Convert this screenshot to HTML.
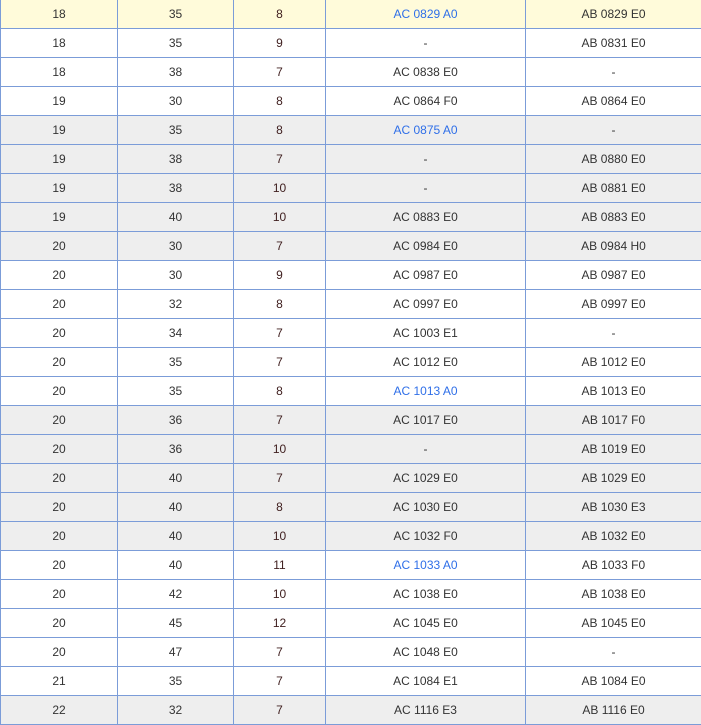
<!DOCTYPE html>
<html><head><style>
body{margin:0;background:#fff;font-family:"Liberation Sans",Arial,sans-serif;font-size:12px;color:#333;}
table{position:absolute;left:0;top:-1px;border-collapse:collapse;width:701px;table-layout:fixed;}
td{border:1px solid #7b9cd8;height:28px;padding:0;text-align:center;line-height:28px;}
tr.g td{background:#eeeeee}
tr.y td{background:#fffbda}
td.c3{color:#402020}
a{color:#2f6fe8;text-decoration:none}
</style></head><body>
<table>
<colgroup><col style="width:117px"><col style="width:116px"><col style="width:92px"><col style="width:200px"><col style="width:176px"></colgroup>
<tr class="y"><td>18</td><td>35</td><td class="c3">8</td><td><a>AC 0829 A0</a></td><td>AB 0829 E0</td></tr>
<tr><td>18</td><td>35</td><td class="c3">9</td><td>-</td><td>AB 0831 E0</td></tr>
<tr><td>18</td><td>38</td><td class="c3">7</td><td>AC 0838 E0</td><td>-</td></tr>
<tr><td>19</td><td>30</td><td class="c3">8</td><td>AC 0864 F0</td><td>AB 0864 E0</td></tr>
<tr class="g"><td>19</td><td>35</td><td class="c3">8</td><td><a>AC 0875 A0</a></td><td>-</td></tr>
<tr class="g"><td>19</td><td>38</td><td class="c3">7</td><td>-</td><td>AB 0880 E0</td></tr>
<tr class="g"><td>19</td><td>38</td><td class="c3">10</td><td>-</td><td>AB 0881 E0</td></tr>
<tr class="g"><td>19</td><td>40</td><td class="c3">10</td><td>AC 0883 E0</td><td>AB 0883 E0</td></tr>
<tr class="g"><td>20</td><td>30</td><td class="c3">7</td><td>AC 0984 E0</td><td>AB 0984 H0</td></tr>
<tr><td>20</td><td>30</td><td class="c3">9</td><td>AC 0987 E0</td><td>AB 0987 E0</td></tr>
<tr><td>20</td><td>32</td><td class="c3">8</td><td>AC 0997 E0</td><td>AB 0997 E0</td></tr>
<tr><td>20</td><td>34</td><td class="c3">7</td><td>AC 1003 E1</td><td>-</td></tr>
<tr><td>20</td><td>35</td><td class="c3">7</td><td>AC 1012 E0</td><td>AB 1012 E0</td></tr>
<tr><td>20</td><td>35</td><td class="c3">8</td><td><a>AC 1013 A0</a></td><td>AB 1013 E0</td></tr>
<tr class="g"><td>20</td><td>36</td><td class="c3">7</td><td>AC 1017 E0</td><td>AB 1017 F0</td></tr>
<tr class="g"><td>20</td><td>36</td><td class="c3">10</td><td>-</td><td>AB 1019 E0</td></tr>
<tr class="g"><td>20</td><td>40</td><td class="c3">7</td><td>AC 1029 E0</td><td>AB 1029 E0</td></tr>
<tr class="g"><td>20</td><td>40</td><td class="c3">8</td><td>AC 1030 E0</td><td>AB 1030 E3</td></tr>
<tr class="g"><td>20</td><td>40</td><td class="c3">10</td><td>AC 1032 F0</td><td>AB 1032 E0</td></tr>
<tr><td>20</td><td>40</td><td class="c3">11</td><td><a>AC 1033 A0</a></td><td>AB 1033 F0</td></tr>
<tr><td>20</td><td>42</td><td class="c3">10</td><td>AC 1038 E0</td><td>AB 1038 E0</td></tr>
<tr><td>20</td><td>45</td><td class="c3">12</td><td>AC 1045 E0</td><td>AB 1045 E0</td></tr>
<tr><td>20</td><td>47</td><td class="c3">7</td><td>AC 1048 E0</td><td>-</td></tr>
<tr><td>21</td><td>35</td><td class="c3">7</td><td>AC 1084 E1</td><td>AB 1084 E0</td></tr>
<tr class="g"><td>22</td><td>32</td><td class="c3">7</td><td>AC 1116 E3</td><td>AB 1116 E0</td></tr>
</table>
</body></html>
